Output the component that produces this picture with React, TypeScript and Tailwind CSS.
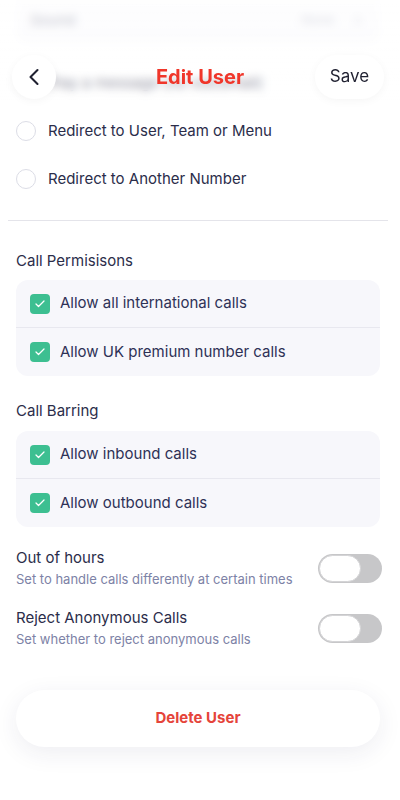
import { ChevronLeft, ChevronRight, Check } from 'lucide-react';

const font = { fontFamily: 'Inter, "Noto Sans", sans-serif' };

function Radio({ label }: { label: string }) {
  return (
    <div className="h-12 flex items-center gap-3">
      <span className="w-5 h-5 rounded-full border-[1.5px] border-[#dcdde6] bg-white flex-shrink-0" />
      <span className="text-[15px] text-[#2b2d4a]">{label}</span>
    </div>
  );
}

function CheckRow({ label, last }: { label: string; last?: boolean }) {
  return (
    <div className={`h-12 flex items-center gap-[10px] px-[14px] ${last ? '' : 'border-b border-[#e8e8ef]'}`}>
      <span className="w-5 h-5 rounded-[4px] bg-[#3dbf91] flex items-center justify-center flex-shrink-0">
        <Check className="w-3 h-3 text-white" strokeWidth={2.5} />
      </span>
      <span className="text-[15px] text-[#2e3156]">{label}</span>
    </div>
  );
}

function Toggle() {
  return (
    <div className="w-16 h-[29px] -mr-[2px] rounded-full bg-[#c7c7c9] p-[1px] flex-shrink-0">
      <div className="w-[42px] h-[27px] rounded-full bg-white border border-[#d4d4d6]" />
    </div>
  );
}

export default function App() {
  return (
    <div className="relative h-[800px] w-[400px] overflow-hidden bg-white" style={font}>
      {/* scrolled content under the header */}
      <div className="pl-4 pr-5">
        <div className="h-[46px] -mt-[3px] bg-[#f7f7fb] rounded-b-xl flex items-center justify-between px-[14px]">
          <span className="text-[15px] text-[#2e3156]">Sound</span>
          <span className="flex items-center gap-4 text-[13px] text-[#8a8da8]">
            None <ChevronRight className="w-4 h-4" />
          </span>
        </div>
        <div className="mt-[16px]">
          <Radio label="Play a message (no voicemail)" />
          <Radio label="Redirect to User, Team or Menu" />
          <Radio label="Redirect to Another Number" />
        </div>
      </div>

      <div className="ml-2 mr-3 mt-[17px] border-t border-[#e4e4ea]" />

      <div className="pl-4 pr-5">
        <h3 className="mt-[30px] mb-[9px] text-[15px] leading-5 text-[#2b2d4a]">Call Permisisons</h3>
        <div className="bg-[#f7f7fb] rounded-xl">
          <CheckRow label="Allow all international calls" />
          <CheckRow label="Allow UK premium number calls" last />
        </div>

        <h3 className="mt-[25px] mb-[10px] text-[15px] leading-5 text-[#2b2d4a]">Call Barring</h3>
        <div className="bg-[#f7f7fb] rounded-xl">
          <CheckRow label="Allow inbound calls" />
          <CheckRow label="Allow outbound calls" last />
        </div>

        <div className="mt-[21px] flex items-center justify-between">
          <div>
            <div className="text-[15px] leading-5 text-[#2b2d4a]">Out of hours</div>
            <div className="text-[13px] leading-[18px] mt-[2px] text-[#7d82a6]">
              Set to handle calls differently at certain times
            </div>
          </div>
          <Toggle />
        </div>

        <div className="mt-5 flex items-center justify-between">
          <div>
            <div className="text-[15px] leading-5 text-[#2b2d4a]">Reject Anonymous Calls</div>
            <div className="text-[13px] leading-[18px] mt-[2px] text-[#7d82a6]">
              Set whether to reject anonymous calls
            </div>
          </div>
          <Toggle />
        </div>

        <button className="mt-[42px] w-full h-[57px] rounded-full bg-white shadow-[0_6px_24px_rgba(40,44,90,0.08)] text-[15px] font-bold text-[#e5443a]">
          Delete User
        </button>
      </div>

      {/* frosted header */}
      <div className="absolute top-0 left-0 right-0 h-[112px] backdrop-blur-[4px] bg-gradient-to-b from-white/80 via-white/55 to-white/40 [mask-image:linear-gradient(to_bottom,black_80%,transparent)]" />
      <div className="absolute top-[55px] left-0 right-0 pl-3 pr-4 flex items-center justify-between">
        <button className="w-11 h-11 rounded-full bg-white shadow-[0_2px_10px_rgba(0,0,0,0.04)] flex items-center justify-center">
          <ChevronLeft className="w-7 h-7 text-[#1f2030]" strokeWidth={1.8} />
        </button>
        <h1 className="absolute left-0 right-0 text-center text-[20px] font-bold text-[#f0362a] pointer-events-none">
          Edit User
        </h1>
        <button className="relative w-[69px] h-11 rounded-full bg-white shadow-[0_2px_10px_rgba(0,0,0,0.04)] text-[17px] text-[#1f2030]">
          Save
        </button>
      </div>
    </div>
  );
}
